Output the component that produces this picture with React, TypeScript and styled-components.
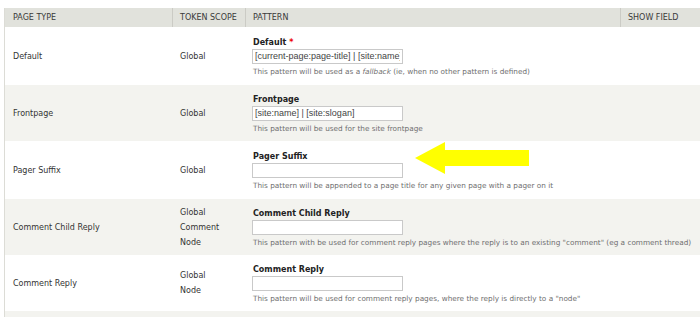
import React from 'react'
import styled, { createGlobalStyle } from 'styled-components'

const GlobalStyle = createGlobalStyle`
  html, body {
    margin: 0;
    padding: 0;
    background: #fff;
    overflow: hidden;
  }
  body {
    font-family: 'DejaVu Sans', Verdana, sans-serif;
    color: #333;
  }
`

const Page = styled.div`
  position: relative;
  width: 700px;
  height: 317px;
  padding-top: 8px;
  box-sizing: border-box;
  overflow: hidden;
`

const Table = styled.div`
  margin-left: 4px;
  border-left: 1px solid #dcdcd6;
`

const Row = styled.div<{ $height: number; $striped?: boolean }>`
  display: grid;
  grid-template-columns: 167px 73px 375px 1fr;
  height: ${({ $height }) => $height}px;
  background: ${({ $striped }) => ($striped ? '#f3f3ef' : '#fff')};
`

const HeaderRow = styled(Row)`
  background: #e1e2dc;
`

const HeadCell = styled.div<{ $divider?: boolean }>`
  display: flex;
  align-items: center;
  padding: 0 8px 0 ${({ $divider }) => ($divider ? 7 : 8)}px;
  border-left: ${({ $divider }) => ($divider ? '1px solid #cbcbc5' : 'none')};
  font-size: 8px;
  text-transform: uppercase;
  color: #3a3a3a;
  white-space: nowrap;
`

const Cell = styled.div`
  display: flex;
  flex-direction: column;
  justify-content: center;
  padding: 0 8px;
  font-size: 8px;
  line-height: 15px;
  color: #333;
  white-space: nowrap;
  min-width: 0;
`

const PatternCell = styled(Cell)`
  line-height: normal;
  padding-top: 2px;
`

const Title = styled.div`
  font-weight: bold;
  font-size: 8px;
  line-height: 12px;
  color: #222;
`

const Required = styled.span`
  color: #e00;
  margin-left: 3px;
`

const Input = styled.input`
  display: block;
  box-sizing: border-box;
  width: 151px;
  height: 15px;
  margin: 0 0 0 -1px;
  padding: 0 2px;
  border: 1px solid #c9c9c9;
  background: #fff;
  font-family: 'Liberation Sans', Arial, sans-serif;
  font-size: 9px;
  color: #444;
  outline: none;
`

const Description = styled.div`
  margin-top: 2px;
  font-size: 7.3px;
  line-height: 12px;
  color: #6f6f6f;
`

const Arrow = styled.svg`
  position: absolute;
  left: 415px;
  top: 142px;
`

type Pattern = {
  type: string
  scope: string[]
  title: string
  required?: boolean
  value: string
  description: React.ReactNode
  height: number
}

const patterns: Pattern[] = [
  {
    type: 'Default',
    scope: ['Global'],
    title: 'Default',
    required: true,
    value: '[current-page:page-title] | [site:name]',
    description: (
      <>
        This pattern will be used as a <em>fallback</em> (ie, when no other
        pattern is defined)
      </>
    ),
    height: 58,
  },
  {
    type: 'Frontpage',
    scope: ['Global'],
    title: 'Frontpage',
    value: '[site:name] | [site:slogan]',
    description: 'This pattern will be used for the site frontpage',
    height: 56,
  },
  {
    type: 'Pager Suffix',
    scope: ['Global'],
    title: 'Pager Suffix',
    value: '',
    description:
      'This pattern will be appended to a page title for any given page with a pager on it',
    height: 58,
  },
  {
    type: 'Comment Child Reply',
    scope: ['Global', 'Comment', 'Node'],
    title: 'Comment Child Reply',
    value: '',
    description:
      'This pattern with be used for comment reply pages where the reply is to an existing "comment" (eg a comment thread)',
    height: 56,
  },
  {
    type: 'Comment Reply',
    scope: ['Global', 'Node'],
    title: 'Comment Reply',
    value: '',
    description:
      'This pattern will be used for comment reply pages, where the reply is directly to a "node"',
    height: 56,
  },
]

const App = (): JSX.Element => (
  <Page>
    <GlobalStyle />
    <Table>
      <HeaderRow $height={19}>
        <HeadCell>Page type</HeadCell>
        <HeadCell $divider>Token scope</HeadCell>
        <HeadCell $divider>Pattern</HeadCell>
        <HeadCell $divider>Show field</HeadCell>
      </HeaderRow>
      {patterns.map((p, i) => (
        <Row key={p.type} $height={p.height} $striped={i % 2 === 1}>
          <Cell>{p.type}</Cell>
          <Cell>
            {p.scope.map((s) => (
              <div key={s}>{s}</div>
            ))}
          </Cell>
          <PatternCell>
            <Title>
              {p.title}
              {p.required && <Required>*</Required>}
            </Title>
            <Input readOnly value={p.value} />
            <Description>{p.description}</Description>
          </PatternCell>
          <Cell />
        </Row>
      ))}
      <Row $height={20} $striped />
    </Table>
    <Arrow width="114" height="32" viewBox="0 0 114 32">
      <polygon points="0,16 30,0 30,8 114,8 114,24 30,24 30,32" fill="#ffff00" />
    </Arrow>
  </Page>
)

export default App
